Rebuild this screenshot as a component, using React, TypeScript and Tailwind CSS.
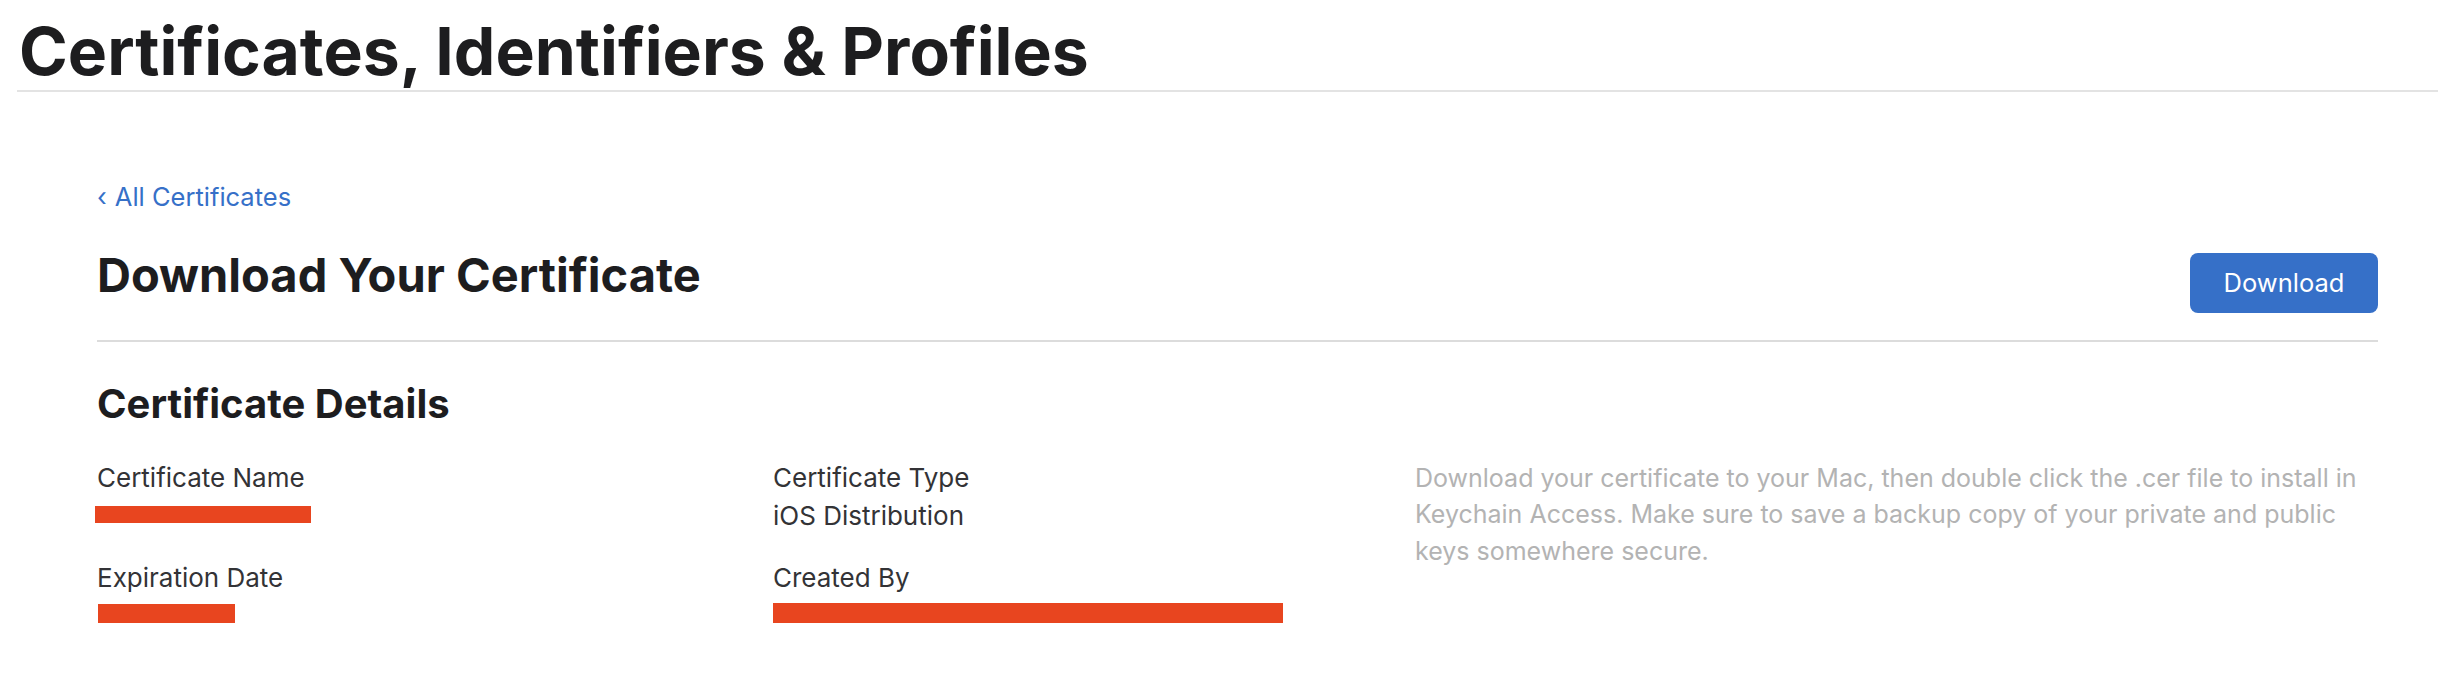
import React from "react";

export default function App() {
  const font = { fontFamily: "Inter, 'Noto Sans', sans-serif" };
  return (
    <div className="w-[2438px] h-[686px] bg-white overflow-hidden" style={font}>
      <div className="pl-[19px] pt-[18px]">
        <h1 className="text-[66px] leading-none font-bold text-[#1d1d1f] whitespace-nowrap">
          Certificates, Identifiers &amp; Profiles
        </h1>
      </div>
      <div className="ml-[17px] mt-[6px] h-[2px] bg-[#e3e3e3]" />

      <div className="ml-[97px] w-[2281px]">
        <a className="mt-[92px] block text-[25.5px] leading-none text-[#3670c8] whitespace-nowrap">
          <span className="mr-[8px]">‹</span>All Certificates
        </a>

        <div className="mt-[43px] flex items-start justify-between">
          <h2 className="mt-[-2px] text-[47px] leading-none font-bold text-[#1d1d1f] whitespace-nowrap">
            Download Your Certificate
          </h2>
          <button className="w-[188px] h-[60px] rounded-[8px] bg-[#3670c8] text-white text-[25.5px] leading-none">
            Download
          </button>
        </div>

        <div className="mt-[27px] h-[2px] bg-[#dcdcdc]" />

        <h3 className="mt-[42px] text-[40px] leading-none font-bold text-[#1d1d1f] whitespace-nowrap">
          Certificate Details
        </h3>

        <div className="mt-[36px] grid grid-cols-[676px_642px_1fr] text-[26px] leading-none text-[#333336]">
          <div className="flex flex-col">
            <div className="mt-[5px] whitespace-nowrap">Certificate Name</div>
            <div className="mt-[12px] h-[24px]">
              <div className="ml-[-2px] mt-[3px] h-[17px] w-[216px] bg-[#e8451f]" />
            </div>
            <div className="mt-[38px] whitespace-nowrap">Expiration Date</div>
            <div className="mt-[12px] h-[24px]">
              <div className="ml-[1px] mt-[1px] h-[19px] w-[137px] bg-[#e8451f]" />
            </div>
          </div>
          <div className="flex flex-col">
            <div className="mt-[5px] whitespace-nowrap">Certificate Type</div>
            <div className="mt-[12px] h-[24px] whitespace-nowrap">iOS Distribution</div>
            <div className="mt-[38px] whitespace-nowrap">Created By</div>
            <div className="mt-[12px] h-[24px]">
              <div className="h-[20px] w-[510px] bg-[#e8451f]" />
            </div>
          </div>
          <p className="text-[25px] leading-[36.5px] text-[#b3b3b3]">
            Download your certificate to your Mac, then double click the .cer file to install in
            <br />
            Keychain Access. Make sure to save a backup copy of your private and public
            <br />
            keys somewhere secure.
          </p>
        </div>
      </div>
    </div>
  );
}
